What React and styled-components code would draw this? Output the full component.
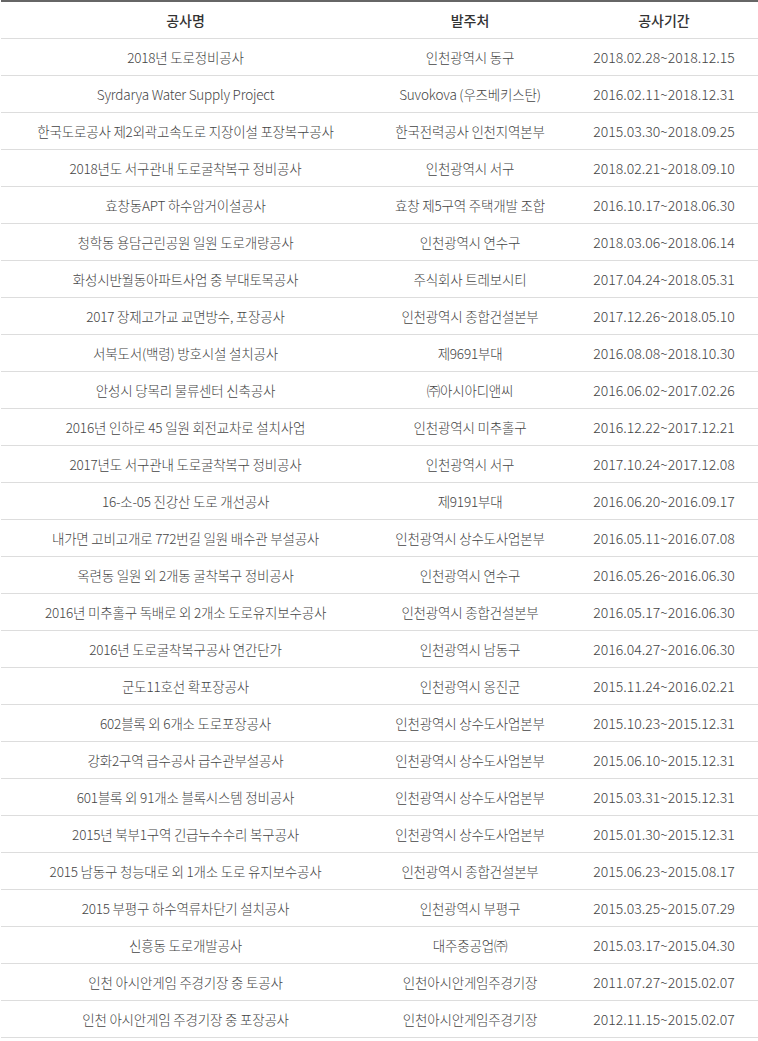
import styled, { createGlobalStyle } from "styled-components";

const GlobalStyle = createGlobalStyle`
  body {
    margin: 0;
    background: #fff;
    font-family: "Noto Sans CJK KR", "Noto Sans", sans-serif;
  }
`;

const Table = styled.table`
  width: 757px;
  margin-left: 1px;
  border-collapse: collapse;
  table-layout: fixed;
  border-top: 2px solid #666;
`;

const Th = styled.th`
  height: 36px;
  padding: 0;
  font-size: 14px;
  font-weight: 500;
  color: #333;
  text-align: center;
  border-bottom: 1px solid #ddd;
`;

const Td = styled.td`
  height: 36px;
  padding: 0;
  font-size: ${(p) => (p.$date ? "14px" : "13.5px")};
  font-weight: 300;
  color: #444;
  text-align: center;
  letter-spacing: ${(p) => (p.$date ? "0" : "-0.2px")};
  white-space: nowrap;
  border-bottom: 1px solid #ddd;
`;

const rows = [
  ["2018년 도로정비공사", "인천광역시 동구", "2018.02.28~2018.12.15"],
  ["Syrdarya Water Supply Project", "Suvokova (우즈베키스탄)", "2016.02.11~2018.12.31"],
  ["한국도로공사 제2외곽고속도로 지장이설 포장복구공사", "한국전력공사 인천지역본부", "2015.03.30~2018.09.25"],
  ["2018년도 서구관내 도로굴착복구 정비공사", "인천광역시 서구", "2018.02.21~2018.09.10"],
  ["효창동APT 하수암거이설공사", "효창 제5구역 주택개발 조합", "2016.10.17~2018.06.30"],
  ["청학동 용담근린공원 일원 도로개량공사", "인천광역시 연수구", "2018.03.06~2018.06.14"],
  ["화성시반월동아파트사업 중 부대토목공사", "주식회사 트레보시티", "2017.04.24~2018.05.31"],
  ["2017 장제고가교 교면방수, 포장공사", "인천광역시 종합건설본부", "2017.12.26~2018.05.10"],
  ["서북도서(백령) 방호시설 설치공사", "제9691부대", "2016.08.08~2018.10.30"],
  ["안성시 당목리 물류센터 신축공사", "㈜아시아디앤씨", "2016.06.02~2017.02.26"],
  ["2016년 인하로 45 일원 회전교차로 설치사업", "인천광역시 미추홀구", "2016.12.22~2017.12.21"],
  ["2017년도 서구관내 도로굴착복구 정비공사", "인천광역시 서구", "2017.10.24~2017.12.08"],
  ["16-소-05 진강산 도로 개선공사", "제9191부대", "2016.06.20~2016.09.17"],
  ["내가면 고비고개로 772번길 일원 배수관 부설공사", "인천광역시 상수도사업본부", "2016.05.11~2016.07.08"],
  ["옥련동 일원 외 2개동 굴착복구 정비공사", "인천광역시 연수구", "2016.05.26~2016.06.30"],
  ["2016년 미추홀구 독배로 외 2개소 도로유지보수공사", "인천광역시 종합건설본부", "2016.05.17~2016.06.30"],
  ["2016년 도로굴착복구공사 연간단가", "인천광역시 남동구", "2016.04.27~2016.06.30"],
  ["군도11호선 확포장공사", "인천광역시 옹진군", "2015.11.24~2016.02.21"],
  ["602블록 외 6개소 도로포장공사", "인천광역시 상수도사업본부", "2015.10.23~2015.12.31"],
  ["강화2구역 급수공사 급수관부설공사", "인천광역시 상수도사업본부", "2015.06.10~2015.12.31"],
  ["601블록 외 91개소 블록시스템 정비공사", "인천광역시 상수도사업본부", "2015.03.31~2015.12.31"],
  ["2015년 북부1구역 긴급누수수리 복구공사", "인천광역시 상수도사업본부", "2015.01.30~2015.12.31"],
  ["2015 남동구 청능대로 외 1개소 도로 유지보수공사", "인천광역시 종합건설본부", "2015.06.23~2015.08.17"],
  ["2015 부평구 하수역류차단기 설치공사", "인천광역시 부평구", "2015.03.25~2015.07.29"],
  ["신흥동 도로개발공사", "대주중공업㈜", "2015.03.17~2015.04.30"],
  ["인천 아시안게임 주경기장 중 토공사", "인천아시안게임주경기장", "2011.07.27~2015.02.07"],
  ["인천 아시안게임 주경기장 중 포장공사", "인천아시안게임주경기장", "2012.11.15~2015.02.07"],
];

export default function App() {
  return (
    <>
      <GlobalStyle />
      <Table>
        <colgroup>
          <col style={{ width: 369 }} />
          <col style={{ width: 200 }} />
          <col style={{ width: 188 }} />
        </colgroup>
        <thead>
          <tr>
            <Th>공사명</Th>
            <Th>발주처</Th>
            <Th>공사기간</Th>
          </tr>
        </thead>
        <tbody>
          {rows.map((r, i) => (
            <tr key={i}>
              <Td>{r[0]}</Td>
              <Td>{r[1]}</Td>
              <Td $date>{r[2]}</Td>
            </tr>
          ))}
        </tbody>
      </Table>
    </>
  );
}
